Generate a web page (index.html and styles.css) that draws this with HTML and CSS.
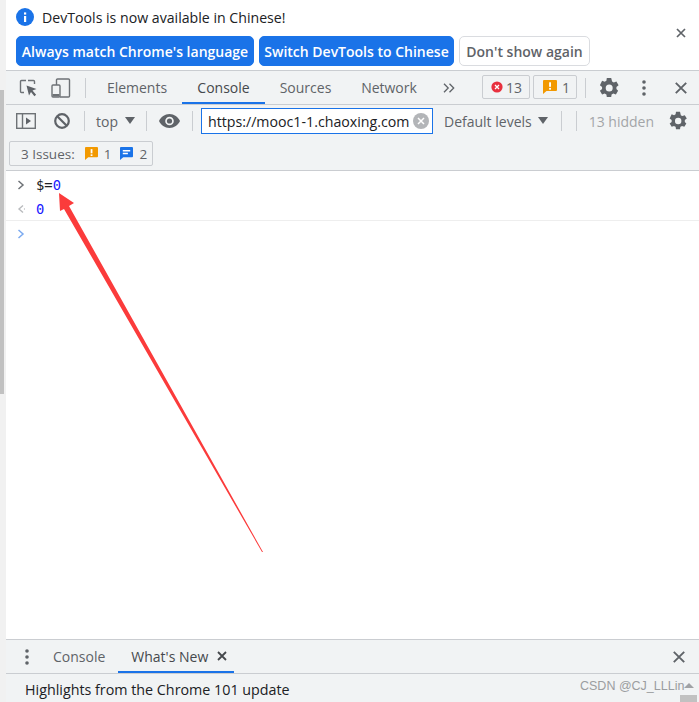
FILE: index.html
```html
<!DOCTYPE html>
<html lang="en">
<head>
<meta charset="utf-8">
<title>DevTools</title>
<link rel="stylesheet" href="styles.css">
</head>
<body>
<div class="page">
  <div class="side"><div class="side-thumb"></div></div>
  <div class="main">
    <div class="infobar">
      <div class="info-top">
        <svg class="info-icon" viewBox="0 0 18 18"><circle cx="9" cy="9" r="9" fill="#1a73e8"/><rect x="8" y="8" width="2.2" height="6" fill="#fff"/><rect x="8" y="4.4" width="2.2" height="2.2" fill="#fff"/></svg>
        <span class="info-text">DevTools is now available in Chinese!</span>
      </div>
      <div class="info-actions">
        <button class="btn btn-primary btn-a">Always match Chrome's language</button>
        <button class="btn btn-primary btn-b">Switch DevTools to Chinese</button>
        <button class="btn btn-plain">Don't show again</button>
        <svg class="info-close" viewBox="0 0 10 10"><path d="M1 1l8 8M9 1l-8 8" stroke="#5f6368" stroke-width="1.7"/></svg>
      </div>
    </div>

    <div class="tabbar">
      <svg class="ic-inspect" viewBox="0 0 18 18"><path d="M7 1.5H2.5a1 1 0 0 0-1 1v10a1 1 0 0 0 1 1H5M9 1.5h5.5a1 1 0 0 1 1 1V5" fill="none" stroke="#6e7276" stroke-width="1.4"/><path d="M7.5 6.5l10 3.5-4 1.6 3.6 4.2-1.7 1.4-3.4-4.2-2 3.6z" fill="#5f6368"/></svg>
      <svg class="ic-device" viewBox="0 0 20 20"><path d="M5.5 7V2a1 1 0 0 1 1-1h11a1 1 0 0 1 1 1v16a1 1 0 0 1-1 1H9" fill="none" stroke="#6e7276" stroke-width="1.4"/><rect x="1" y="7" width="8" height="12" rx="1" fill="none" stroke="#6e7276" stroke-width="1.4"/><rect x="1.5" y="16" width="7" height="2.5" fill="#6e7276"/></svg>
      <span class="vsep vsep-tab"></span>
      <span class="tab tab-el">Elements</span>
      <span class="tab tab-active">Console</span>
      <span class="tab tab-src">Sources</span>
      <span class="tab tab-net">Network</span>
      <svg class="ic-more" viewBox="0 0 12 10"><path d="M1 .7l4.2 4.3L1 9.300M6.500 .7l4.200 4.300-4.200 4.300" fill="none" stroke="#5f6368" stroke-width="1.300"/></svg>
      <span class="badge badge-err">
        <svg class="badge-ic" viewBox="0 0 12 12"><circle cx="6" cy="6" r="5.600" fill="#e8303e"/><path d="M4 4l4 4M8 4l-4 4" stroke="#fff" stroke-width="1.300"/></svg>13
      </span>
      <span class="badge badge-warn">
        <svg class="badge-ic-w" viewBox="0 0 14 14"><path d="M1 0h12a1 1 0 0 1 1 1v9a1 1 0 0 1-1 1H3.500L0 14V1a1 1 0 0 1 1-1z" fill="#f29900"/><rect x="6.100" y="2.300" width="1.900" height="4.500" fill="#fff"/><rect x="6.100" y="7.900" width="1.900" height="1.800" fill="#fff"/></svg>1
      </span>
      <span class="vsep vsep-tab2"></span>
      <svg class="ic-gear gear-top" viewBox="0 0 24 24"><path fill="#5f6368" d="M19.400 13a7.500 7.500 0 0 0 0-2l2.200-1.700-2.200-3.700-2.600 1a7.700 7.700 0 0 0-1.700-1L14.200 2H9.800l-.4 2.700a7.700 7.700 0 0 0-1.700 1l-2.600-1L2.900 9.300 5.100 11a7.500 7.500 0 0 0 0 2l-2.200 1.700 2.200 3.700 2.600-1c.5.400 1.100.700 1.700 1l.4 2.600h4.400l.4-2.600c.6-.3 1.200-.6 1.700-1l2.600 1 2.200-3.700zM12.200 15.500a3.500 3.500 0 1 1 0-7 3.500 3.500 0 0 1 0 7z"/></svg>
      <svg class="ic-dots dots-top" viewBox="0 0 4 16"><circle cx="2" cy="2" r="1.800" fill="#5f6368"/><circle cx="2" cy="8" r="1.800" fill="#5f6368"/><circle cx="2" cy="14" r="1.800" fill="#5f6368"/></svg>
      <svg class="ic-x x-top" viewBox="0 0 12 12"><path d="M.8.8l10.400 10.400M11.200.8L.8 11.200" stroke="#5f6368" stroke-width="1.900"/></svg>
    </div>

    <div class="toolbar">
      <svg class="ic-sidebar" viewBox="0 0 20 16"><rect x=".7" y=".7" width="18.600" height="14.600" fill="none" stroke="#6e7276" stroke-width="1.400"/><path d="M6.500 1v14" stroke="#6e7276" stroke-width="1.400"/><path d="M10 4.500l5 3.500-5 3.500z" fill="#5f6368"/></svg>
      <svg class="ic-block" viewBox="0 0 16 16"><circle cx="8" cy="8" r="6.800" fill="none" stroke="#5f6368" stroke-width="2.200"/><path d="M3.500 3.500l9 9" stroke="#5f6368" stroke-width="2.200"/></svg>
      <span class="vsep vsep-a"></span>
      <span class="ctx">top</span>
      <span class="tri tri-top"></span>
      <span class="vsep vsep-b"></span>
      <svg class="ic-eye" viewBox="0 0 21 14"><path fill="#5f6368" d="M10.500 0C5.800 0 1.900 2.900 0 7c1.900 4.100 5.800 7 10.500 7S19.100 11.100 21 7c-1.900-4.100-5.800-7-10.500-7zm0 11.300a4.300 4.300 0 1 1 0-8.600 4.300 4.300 0 0 1 0 8.600z"/><circle cx="10.500" cy="7" r="2.600" fill="#5f6368"/></svg>
      <span class="vsep vsep-c"></span>
      <div class="filter">
        <span class="filter-text">https://mooc1-1.chaoxing.com</span>
        <svg class="ic-clear" viewBox="0 0 16 16"><circle cx="8" cy="8" r="8" fill="#b3b5b8"/><path d="M5 5l6 6M11 5l-6 6" stroke="#fff" stroke-width="1.500"/></svg>
      </div>
      <span class="levels">Default levels</span>
      <span class="tri tri-levels"></span>
      <span class="vsep vsep-d"></span>
      <span class="vsep vsep-e"></span>
      <span class="hidden-count">13 hidden</span>
      <svg class="ic-gear gear-low" viewBox="0 0 24 24"><path fill="#5f6368" d="M19.400 13a7.500 7.500 0 0 0 0-2l2.200-1.700-2.200-3.700-2.600 1a7.700 7.700 0 0 0-1.700-1L14.200 2H9.800l-.4 2.700a7.700 7.700 0 0 0-1.700 1l-2.600-1L2.900 9.300 5.100 11a7.500 7.500 0 0 0 0 2l-2.200 1.700 2.200 3.700 2.600-1c.5.400 1.100.700 1.700 1l.4 2.600h4.400l.4-2.600c.6-.3 1.200-.6 1.700-1l2.600 1 2.200-3.700zM12.200 15.500a3.500 3.500 0 1 1 0-7 3.500 3.500 0 0 1 0 7z"/></svg>
    </div>

    <div class="issuesbar">
      <span class="issues">
        <span class="issues-label">3 Issues:</span>
        <svg class="iss-ic" viewBox="0 0 14 14"><path d="M1 0h12a1 1 0 0 1 1 1v9a1 1 0 0 1-1 1H3.500L0 14V1a1 1 0 0 1 1-1z" fill="#f29900"/><rect x="6.100" y="2.300" width="1.900" height="4.500" fill="#fff"/><rect x="6.100" y="7.900" width="1.900" height="1.800" fill="#fff"/></svg>
        <span class="iss-num">1</span>
        <svg class="iss-ic iss-ic-b" viewBox="0 0 14 14"><path d="M1 0h12a1 1 0 0 1 1 1v9a1 1 0 0 1-1 1H3.500L0 14V1a1 1 0 0 1 1-1z" fill="#1a73e8"/><path d="M3 3.300h8v1.500H3zM3 6.300h5.500v1.500H3z" fill="#fff"/></svg>
        <span class="iss-num">2</span>
      </span>
    </div>

    <div class="console">
      <div class="row row-in">
        <svg class="chev" viewBox="0 0 8 10"><path d="M1.500 1l4.500 4-4.500 4" fill="none" stroke="#6e7276" stroke-width="1.500"/></svg>
        <code class="code">$=<span class="num">0</span></code>
      </div>
      <div class="row row-out">
        <svg class="chev" viewBox="0 0 8 10"><path d="M6 1.500L2 5l4 3.500" fill="none" stroke="#b9bbbe" stroke-width="1.400"/><circle cx="7.500" cy="5" r=".7" fill="#b9bbbe"/></svg>
        <code class="code num-out">0</code>
      </div>
      <div class="row row-prompt">
        <svg class="chev" viewBox="0 0 8 10"><path d="M1.500 1l4.500 4-4.500 4" fill="none" stroke="#7baaf0" stroke-width="1.500"/></svg>
      </div>
    </div>

    <div class="drawerbar">
      <svg class="ic-dots dots-low" viewBox="0 0 4 16"><circle cx="2" cy="2" r="1.800" fill="#5f6368"/><circle cx="2" cy="8" r="1.800" fill="#5f6368"/><circle cx="2" cy="14" r="1.800" fill="#5f6368"/></svg>
      <span class="dtab">Console</span>
      <span class="dtab dtab-active">What's New
        <svg class="dtab-x" viewBox="0 0 10 10"><path d="M1 1l8 8M9 1l-8 8" stroke="#45484c" stroke-width="1.800"/></svg>
      </span>
      <svg class="ic-x x-low" viewBox="0 0 12 12"><path d="M.8.8l10.400 10.400M11.200.8L.8 11.200" stroke="#5f6368" stroke-width="1.900"/></svg>
    </div>
    <div class="drawer-body">Highlights from the Chrome 101 update</div>
  </div>
</div>

<svg class="arrow" viewBox="0 0 699 702"><polygon points="59,193 74,203 69,206 263,552 262,552 64,209 60,211" fill="#fb3b3b"/></svg>
<span class="watermark">CSDN @CJ_LLLin</span>
<span class="mini-tri"></span>
<span class="mini-thumb"></span>
</body>
</html>
```

FILE: styles.css
```css
* { box-sizing: border-box; }
html, body { margin: 0; padding: 0; height: 702px; overflow: hidden; background: #fff; }
body { position: relative; font-family: "Open Sans", "Noto Sans", sans-serif; color: #5f6368; }
svg { display: block; flex: none; }

.page { display: flex; height: 702px; }
.side { width: 6px; background: #f1f1f1; padding-top: 90px; }
.side-thumb { width: 4px; height: 304px; background: #c1c1c1; }
.main { flex: 1; min-width: 0; display: flex; flex-direction: column; }

.infobar { height: 71px; padding: 8px 0 0 10px; border-bottom: 1px solid #cacdd1; background: #fff; }
.info-top { display: flex; align-items: center; gap: 8px; height: 18px; }
.info-icon { width: 18px; height: 18px; }
.info-text { font-size: 14.150px; color: #202124; }
.info-actions { display: flex; gap: 5px; margin-top: 10px; align-items: flex-start; }
.btn { height: 30px; border-radius: 5px; padding: 0; font: 600 14px "Open Sans", sans-serif; border: 1px solid #1a73e8; white-space: nowrap; }
.btn-primary { background: #1a73e8; color: #fff; }
.btn-a { width: 238px; }
.btn-b { width: 195px; }
.btn-plain { width: 131px; background: #fff; border-color: #dadce0; color: #5f6368; }
.info-close { width: 10px; height: 10px; margin: -8px 0 0 81px; }

.tabbar { height: 34px; display: flex; align-items: center; background: #f1f3f4; border-bottom: 1px solid #cacdd1; padding-left: 13px; font-size: 14px; }
.ic-inspect { width: 18px; height: 18px; }
.ic-device { width: 20px; height: 20px; margin-left: 14px; }
.vsep { display: block; flex: none; width: 1px; height: 20px; background: #cacdd1; }
.vsep-tab { margin-left: 14px; margin-right: 6px; }
.tab { flex: none; display: flex; align-items: center; justify-content: center; height: 33px; white-space: nowrap; }
.tab-el { width: 90px; }
.tab-active { width: 83px; color: #45484c; box-shadow: inset 0 -2px 0 #1a73e8; }
.tab-src { width: 81px; }
.tab-net { width: 86px; }
.ic-more { width: 12px; height: 10px; margin-left: 11px; }
.badge { display: flex; align-items: center; height: 24px; border: 1px solid #cacdd1; border-radius: 2px; font-size: 14px; margin-top: -1px; }
.badge-err { width: 48px; margin-left: 27px; padding-left: 8px; gap: 3px; }
.badge-warn { width: 44px; margin-left: 3px; padding-left: 9px; gap: 5px; }
.badge-ic { width: 12px; height: 12px; }
.badge-ic-w { width: 14px; height: 14px; }
.vsep-tab2 { margin-left: 8px; }
.ic-gear { width: 24px; height: 24px; }
.gear-top { margin-left: 11px; }
.ic-dots { width: 4px; height: 16px; }
.dots-top { margin-left: 21px; }
.ic-x { width: 12px; height: 12px; }
.x-top { margin-left: 29px; }

.toolbar { height: 35px; display: flex; align-items: center; background: #f1f3f4; padding-left: 10px; padding-bottom: 3px; font-size: 14px; }
.ic-sidebar { width: 20px; height: 16px; }
.ic-block { width: 16px; height: 16px; margin-left: 18px; }
.vsep-a { margin-left: 14px; }
.ctx { margin-left: 11px; }
.tri { display: block; flex: none; width: 0; height: 0; border-left: 5px solid transparent; border-right: 5px solid transparent; border-top: 7px solid #5f6368; }
.tri-top { margin-left: 7px; margin-top: -2px; }
.vsep-b { margin-left: 11px; }
.ic-eye { width: 21px; height: 14px; margin-left: 12px; }
.vsep-c { margin-left: 12px; }
.filter { display: flex; align-items: center; width: 232px; height: 26px; margin-left: 8px; background: #fff; border: 1px solid #1a73e8; padding-left: 6px; }
.filter-text { width: 204px; overflow: hidden; white-space: nowrap; color: #202124; font-size: 14.200px; }
.ic-clear { width: 16px; height: 16px; margin-left: 1px; }
.levels { margin-left: 11px; }
.tri-levels { margin-left: 6px; margin-top: -2px; }
.vsep-d { margin-left: 13px; }
.vsep-e { margin-left: 14px; }
.hidden-count { margin-left: 12px; color: #a3a5a8; }
.gear-low { width: 22px; height: 22px; margin-left: 13px; }

.issuesbar { height: 31px; padding: 1px 0 0 3px; background: #f1f3f4; border-bottom: 1px solid #cacdd1; }
.issues { display: inline-flex; align-items: center; width: 144px; height: 25px; padding-left: 11px; border: 1px solid #cacdd1; border-radius: 2px; font-size: 13.500px; }
.iss-ic { width: 13px; height: 13px; margin-left: 10px; }
.iss-ic-b { margin-left: 9px; }
.iss-num { margin-left: 6px; }

.console { flex: 1; background: #fff; min-height: 0; }
.row { display: flex; align-items: center; padding-left: 11px; }
.row-in { height: 26px; padding-top: 2px; }
.row-out { height: 24px; border-bottom: 1px solid #eeeeee; }
.row-prompt { height: 26px; }
.chev { width: 8px; height: 10px; margin-right: 11px; }
.code { font: 13.800px "DejaVu Sans Mono", monospace; color: #202124; }
.num, .num-out { color: #1a1aff; }

.drawerbar { height: 35px; display: flex; align-items: center; background: #f1f3f4; border-top: 1px solid #cacdd1; border-bottom: 1px solid #cacdd1; padding-left: 19px; font-size: 14px; }
.dots-low { margin-right: 12px; }
.dtab { display: flex; align-items: center; height: 33px; padding: 0 12px; white-space: nowrap; }
.dtab-active { width: 116px; padding-left: 13px; margin-left: 1px; color: #45484c; box-shadow: inset 0 -2px 0 #1a73e8; gap: 9px; }
.dtab-x { width: 10px; height: 10px; margin-top: -2px; }
.x-low { margin-left: auto; margin-right: 14px; }
.drawer-body { height: 28px; padding: 6px 0 0 19px; background: #f1f3f4; font-size: 14.300px; color: #202124; white-space: nowrap; }

.arrow { position: absolute; left: 0; top: 0; width: 699px; height: 702px; pointer-events: none; }
.watermark { position: absolute; left: 580px; top: 679px; font: 12.500px "Liberation Sans", sans-serif; color: #9b9da0; white-space: nowrap; }
.mini-tri { position: absolute; left: 684px; top: 683px; width: 0; height: 0; border-left: 5px solid transparent; border-right: 5px solid transparent; border-bottom: 5px solid #a0a2a5; }
.mini-thumb { position: absolute; left: 680px; top: 695px; width: 17px; height: 7px; background: #c1c1c1; }
```
